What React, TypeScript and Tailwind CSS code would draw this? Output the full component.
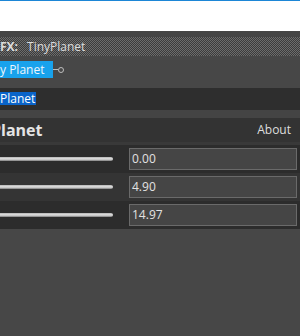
import React from 'react'

const values = ['0.00', '4.90', '14.97']

function Slider() {
  return (
    <div className="w-[113px] h-[4px] rounded-r-full bg-gradient-to-b from-[#b4b4b4] via-[#e4e4e4] to-[#7c7c7c]" />
  )
}

export default function App() {
  return (
    <div className="w-[300px] h-[336px] overflow-hidden bg-[#474747] font-['Open_Sans',sans-serif] flex flex-col">
      {/* window chrome */}
      <div className="h-px bg-[#1d86d6]" />
      <div className="h-[30px] bg-white" />
      <div className="h-[6px] bg-[#444444]" />

      {/* node header */}
      <div className="h-[19px] flex items-center text-[12px] leading-none text-[#dcdcdc] bg-[repeating-conic-gradient(#6c6c6c_0_25%,#3c3c3c_0_50%)] bg-[length:2px_2px]">
        <span className="font-bold">FX:</span>
        <span className="ml-[9px]">TinyPlanet</span>
      </div>

      {/* node body with tag */}
      <div className="h-[32px] flex items-start pt-[5px]">
        <div className="h-[17px] w-[53px] bg-[#18a2ec] text-[12px] leading-[17px] text-[#eef6fb]">y Planet</div>
        <div className="h-[17px] flex items-center">
          <div className="w-[5px] h-px bg-[#bdbdbd]" />
          <div className="w-[6px] h-[6px] rounded-full border border-[#bdbdbd]" />
        </div>
      </div>

      {/* selected name */}
      <div className="h-[22px] bg-[#2e2e2e] flex items-start pt-[4px]">
        <span className="h-[13px] bg-[#0a64c9] text-[12px] leading-[13px] text-white pr-px">Planet</span>
      </div>

      <div className="h-[8px] bg-[#444444]" />

      {/* panel title */}
      <div className="h-[24px] bg-[#333333] flex items-center justify-between pr-[9px]">
        <span className="-ml-[9px] text-[16px] font-bold text-[#e4e4e4] leading-none">Planet</span>
        <span className="text-[12px] text-[#dedede] leading-none">About</span>
      </div>
      <div className="h-[3px] bg-[#393939]" />

      {/* parameter rows */}
      {values.map((v, i) => (
        <div
          key={v}
          className={`h-[28px] flex items-center justify-between pr-[3px] ${i % 2 === 1 ? 'bg-[#343434]' : 'bg-[#2c2c2c]'}`}
        >
          <Slider />
          <div className="w-[168px] h-[22px] border border-[#6a6a6a] bg-[#454545] text-[12px] leading-[20px] text-[#e2e2e2] pl-[2px]">
            {v}
          </div>
        </div>
      ))}
    </div>
  )
}
